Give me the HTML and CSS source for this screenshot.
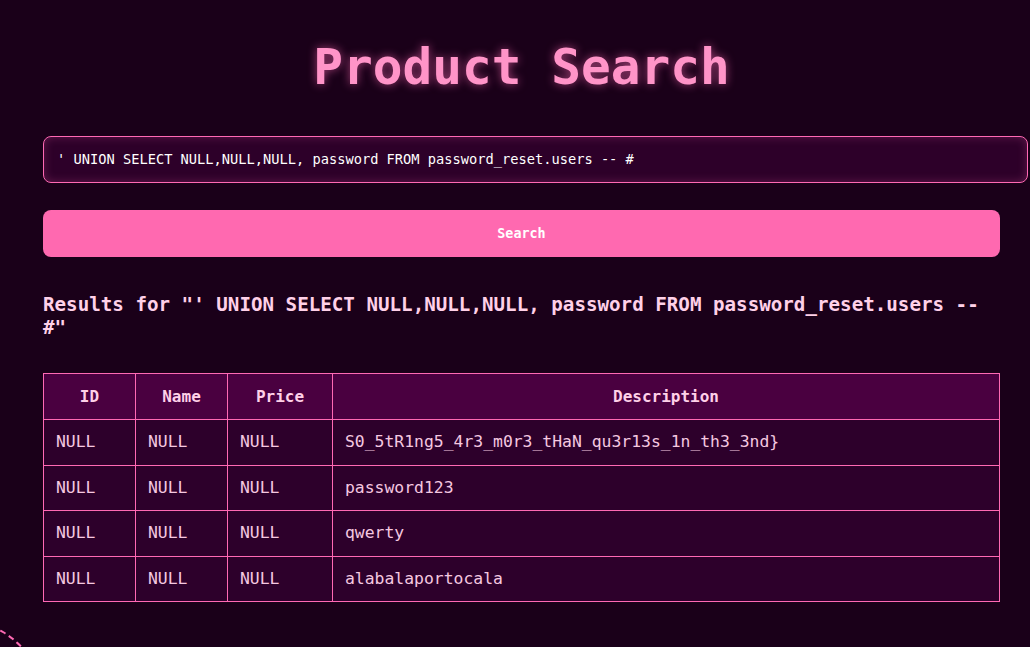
FILE: index.html
```html
<!DOCTYPE html>
<html lang="en">
<head>
<meta charset="utf-8">
<title>Product Search</title>
<link rel="stylesheet" href="styles.css">
</head>
<body>
<div class="deco"></div>
<main class="container">
  <h1 class="title">Product Search</h1>
  <form class="search">
    <input class="search-input" type="text" value="' UNION SELECT NULL,NULL,NULL, password FROM password_reset.users -- #">
    <button class="search-btn" type="button">Search</button>
  </form>
  <h2 class="results-title">Results for "' UNION SELECT NULL,NULL,NULL, password FROM password_reset.users -- #"</h2>
  <table class="results">
    <thead>
      <tr><th class="c-id">ID</th><th class="c-name">Name</th><th class="c-price">Price</th><th>Description</th></tr>
    </thead>
    <tbody>
      <tr><td>NULL</td><td>NULL</td><td>NULL</td><td>S0_5tR1ng5_4r3_m0r3_tHaN_qu3r13s_1n_th3_3nd}</td></tr>
      <tr><td>NULL</td><td>NULL</td><td>NULL</td><td>password123</td></tr>
      <tr><td>NULL</td><td>NULL</td><td>NULL</td><td>qwerty</td></tr>
      <tr><td>NULL</td><td>NULL</td><td>NULL</td><td>alabalaportocala</td></tr>
    </tbody>
  </table>
</main>
</body>
</html>
```

FILE: styles.css
```css
html, body {
  margin: 0;
  padding: 0;
}
html {
  height: 100%;
  overflow: hidden;
}
body {
  background: #1a0019;
  color: #ffd0e8;
  font-family: "DejaVu Sans Mono", monospace;
  height: 100%;
  overflow: hidden;
  position: relative;
}
.deco {
  position: absolute;
  left: -120px;
  top: 620px;
  width: 160px;
  height: 160px;
  border: 2px dashed #ff69b4;
  border-radius: 50%;
}
.container {
  padding: 0 30px 0 43px;
  display: flex;
  flex-direction: column;
}
.title {
  margin: 39px 0 0;
  text-align: center;
  font-size: 49.4px;
  font-weight: bold;
  line-height: 57px;
  color: #ff94c8;
  text-shadow: 0 0 10px rgba(255, 105, 180, 0.6);
}
.search {
  display: flex;
  flex-direction: column;
  gap: 27px;
  margin-top: 40px;
}
.search-input {
  box-sizing: content-box;
  width: 100%;
  height: 45px;
  line-height: 45px;
  padding: 0 13px;
  margin: 0;
  border: 1px solid #ff69b4;
  border-radius: 8px;
  background: #2d0029;
  box-shadow: inset 0 0 10px rgba(255, 105, 180, 0.25);
  color: #ffffff;
  font-family: "DejaVu Sans Mono", monospace;
  font-size: 13.7px;
  outline: none;
}
.search-btn {
  height: 47px;
  border: none;
  border-radius: 8px;
  background: #ff69b0;
  color: #ffffff;
  font-family: "DejaVu Sans Mono", monospace;
  font-size: 13.4px;
  font-weight: bold;
  cursor: pointer;
}
.results-title {
  margin: 36px 0 0;
  font-size: 19.2px;
  font-weight: bold;
  line-height: 23px;
  color: #ffd0e8;
}
.results {
  margin-top: 34px;
  width: 100%;
  border-collapse: collapse;
  table-layout: fixed;
}
.results th,
.results td {
  border: 1px solid #ff69b4;
  padding: 12px 12px;
  font-size: 16px;
  text-align: left;
}
.results th {
  background: #4a0040;
  text-align: center;
  font-weight: bold;
  line-height: 21px;
  color: #ffd0e8;
}
.results td {
  background: #2d002b;
  color: #f5c8e0;
  font-size: 16.4px;
  line-height: 20.5px;
}
.c-id { width: 67px; }
.c-name { width: 67px; }
.c-price { width: 80px; }
```
